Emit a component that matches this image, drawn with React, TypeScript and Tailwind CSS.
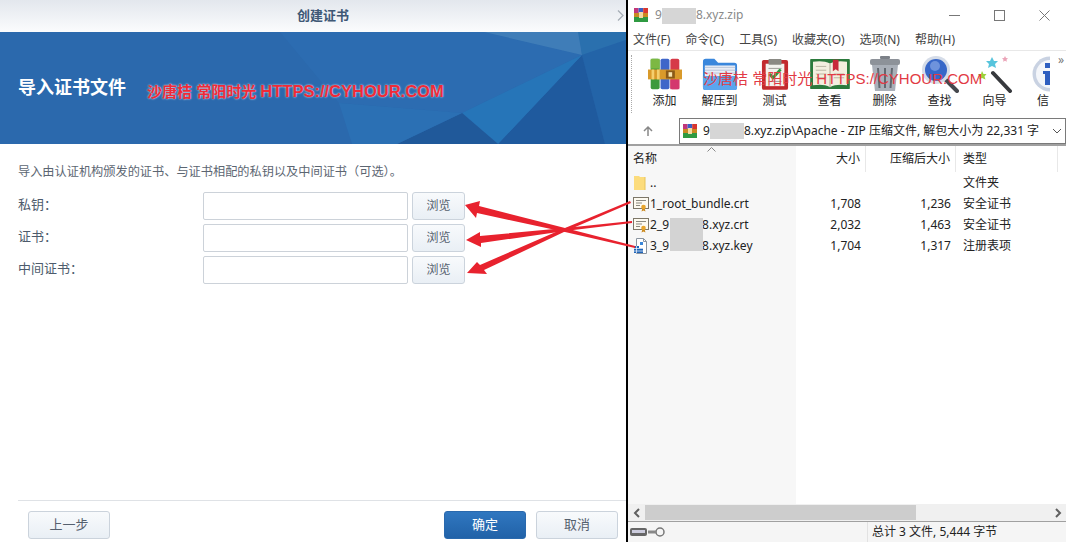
const cjk = "font-['Liberation_Sans','Noto_Sans_CJK_SC',sans-serif]";
const winFont = "font-['Noto_Sans','Noto_Sans_CJK_SC',sans-serif]";

function WinrarIcon({ size = 16 }: { size?: number }) {
	return (
		<svg width={size} height={size} viewBox="0 0 16 16">
			<rect x="1" y="1" width="4.6" height="14" fill="#c2367a" />
			<rect x="5.6" y="1" width="4.6" height="14" fill="#3b5fc4" />
			<rect x="10.2" y="1" width="4.8" height="14" fill="#d8362f" />
			<rect x="1" y="10" width="14" height="5" fill="#2f9a41" />
			<rect x="1" y="6" width="14" height="4" fill="#c98a22" />
			<rect x="6" y="5" width="4" height="6" fill="#f3d9a0" />
		</svg>
	);
}

function BigRar() {
	return (
		<svg width="34" height="36" viewBox="0 0 38 36">
			<rect x="3" y="1" width="10" height="34" rx="2" fill="#3c9a3c" />
			<rect x="14" y="1" width="10" height="34" rx="2" fill="#3f66c9" />
			<rect x="25" y="1" width="10" height="34" rx="2" fill="#d63a48" />
			<rect x="3" y="1" width="10" height="11" fill="#7cb843" />
			<rect x="25" y="24" width="10" height="11" fill="#d4386e" />
			<rect x="0" y="13" width="38" height="11" fill="#d99a2b" />
			<rect x="4" y="13" width="3" height="11" fill="#f5cf6e" />
			<rect x="10" y="13" width="3" height="11" fill="#f5cf6e" />
			<rect x="20" y="14" width="10" height="9" fill="#8a5a18" />
			<rect x="23" y="16" width="4" height="5" fill="#f8e6b0" />
		</svg>
	);
}

function FolderIcon() {
	return (
		<svg width="36" height="36" viewBox="0 0 38 36">
			<path d="M1 5a3 3 0 0 1 3-3h9l4 4h17a3 3 0 0 1 3 3v23a3 3 0 0 1-3 3H4a3 3 0 0 1-3-3z" fill="#3a87dc" />
			<rect x="3" y="9" width="32" height="12" fill="#e9edf5" />
			<path d="M3 11h32M3 14h32M3 17h32" stroke="#b7c4d8" strokeWidth="1" />
			<path d="M1 20h36v12a3 3 0 0 1-3 3H4a3 3 0 0 1-3-3z" fill="#5aa5ee" />
		</svg>
	);
}

function ClipboardIcon() {
	return (
		<svg width="28" height="36" viewBox="0 0 30 36">
			<rect x="1" y="3" width="28" height="32" rx="2" fill="#c22a2e" />
			<rect x="5" y="7" width="20" height="24" fill="#f2f2ee" />
			<rect x="8" y="2" width="14" height="6" rx="1" fill="#8a8a84" />
			<path d="M9 18l4 4 8-9" fill="none" stroke="#2c9a3c" strokeWidth="3" />
			<path d="M8 26h14M8 12h14" stroke="#9a9a94" strokeWidth="1" />
		</svg>
	);
}

function BookIcon() {
	return (
		<svg width="42" height="34" viewBox="0 0 42 36">
			<rect x="0" y="2" width="42" height="32" rx="1" fill="#2b7a3c" />
			<path d="M3 5c6-1 13-1 18 2 5-3 12-3 18-2v25c-6-1-13-1-18 2-5-3-12-3-18-2z" fill="#f3efdf" />
			<path d="M6 10h11M6 14h11M6 18h11M6 22h11M25 18h11M25 22h11" stroke="#b9b4a0" strokeWidth="1" />
			<path d="M24 3h6v12l-3-2-3 2z" fill="#c8283a" />
			<path d="M21 7v25" stroke="#a8a28c" strokeWidth="1" />
		</svg>
	);
}

function TrashIcon() {
	return (
		<svg width="30" height="36" viewBox="0 0 30 36">
			<rect x="10" y="0" width="10" height="3" rx="1" fill="#7c8188" />
			<rect x="0" y="3" width="30" height="6" rx="2" fill="#8d9299" />
			<path d="M2 9h26l-3 26H5z" fill="#a9afb8" />
			<path d="M8 12l1.500 20M15 12v20M22 12l-1.500 20" stroke="#626870" strokeWidth="2" />
		</svg>
	);
}

function SearchIcon() {
	return (
		<svg width="38" height="38" viewBox="0 0 38 38">
			<path d="M24 24l12 12" stroke="#45484d" strokeWidth="4" strokeLinecap="round" />
			<circle cx="15" cy="15" r="14" fill="#d5dce8" />
			<circle cx="15" cy="15" r="11" fill="#3767c8" />
			<circle cx="14" cy="11" r="5" fill="#6e93dc" />
		</svg>
	);
}

function WandIcon() {
	return (
		<svg width="36" height="38" viewBox="0 0 36 38">
			<path d="M16 18l17 18" stroke="#37393d" strokeWidth="4" strokeLinecap="round" />
			<path d="M15 2l2 4 4 0-3 3 1 4-4-2-4 2 1-4-3-3 4 0z" fill="#57c4dc" />
			<path d="M5 16l1.500 3 3 0-2 2.500 1 3-3.500-1.500-3 1.500 1-3-2-2.500 3 0z" fill="#9bd23a" />
			<path d="M28 1l1 2 2 .3-1.500 1.500.4 2-1.900-1-1.900 1 .4-2L25 3.300l2-.3z" fill="#eba4b8" />
		</svg>
	);
}

function InfoIcon() {
	return (
		<svg width="18" height="36" viewBox="0 0 18 36">
			<circle cx="18" cy="18" r="17.500" fill="#c9d2e2" />
			<circle cx="18" cy="18" r="14" fill="#f4f6fa" />
			<rect x="11" y="15" width="7" height="3" fill="#2f5fc0" />
			<rect x="13" y="15" width="5" height="14" fill="#2f5fc0" />
			<rect x="13" y="7" width="5" height="5" fill="#2f5fc0" />
		</svg>
	);
}

function CertIcon() {
	return (
		<svg width="16" height="16" viewBox="0 0 16 16">
			<rect x=".5" y="1.500" width="15" height="11" fill="#fdfaf0" stroke="#7d7768" />
			<path d="M3 4.500h10M3 7h6M3 9.500h4" stroke="#8d8a80" strokeWidth="1" />
			<path d="M9.500 12l-1 3.500 2-1 2 1-1-3.500z" fill="#c9871c" />
			<circle cx="10.500" cy="11" r="2.300" fill="#e8a52a" />
		</svg>
	);
}

function KeyFileIcon() {
	return (
		<svg width="16" height="16" viewBox="0 0 16 16">
			<path d="M3.500.5h7l3 3v12h-10z" fill="#fff" stroke="#8a94a0" />
			<path d="M10.500.5v3h3" fill="none" stroke="#8a94a0" />
			<path d="M1 8h5v7H1zM6 10h4v5H6z" fill="#1f64b8" />
			<path d="M7 4h3v3H7z" fill="#3a86d8" />
			<path d="M1 10.500h9M1 13h9M3.500 8v7" stroke="#fff" strokeWidth=".7" />
		</svg>
	);
}

function BannerArt() {
	return (
		<svg className="absolute inset-0 h-full w-full" viewBox="0 0 626 112" preserveAspectRatio="none">
			<polygon points="280,0 484,0 582,23 462,81 339,71" fill="#2c6cb1" />
			<polygon points="484,0 580,0 582,23" fill="#3f7db8" />
			<polygon points="578,0 626,0 626,8 582,23" fill="#2a70ae" />
			<polygon points="582,23 626,8 626,112 605,112" fill="#2364a8" />
			<polygon points="582,23 498,112 605,112" fill="#1f5a9e" />
			<polygon points="582,23 462,81 498,112" fill="#2675b8" />
			<polygon points="462,81 397,112 498,112" fill="#20599a" />
			<polygon points="339,71 462,81 397,112 352,112" fill="#2b70b4" />
		</svg>
	);
}

function FieldRow({ label }: { label: string }) {
	return (
		<div className="flex items-center h-[28px] text-[13px] text-[#4d5b6c]">
			<span className="w-[185px] shrink-0 -mt-[3px]">{label}</span>
			<div className="w-[205px] h-[28px] bg-white border border-[#ccd2d9] rounded-[2px]" />
			<button className="ml-[4px] w-[53px] h-[28px] bg-gradient-to-b from-[#f8fafc] to-[#e9eff5] border border-[#cbd3dc] rounded-[3px] text-[#55606e] text-[12px]">
				浏览
			</button>
		</div>
	);
}

function ToolButton({ label, children }: { label: string; children: React.ReactNode }) {
	return (
		<div className="w-[55px] shrink-0 flex flex-col items-center">
			<div className="h-[38px] flex items-center justify-center">{children}</div>
			<span className="text-[12px] leading-[16px] text-[#222]">{label}</span>
		</div>
	);
}

function ListRow({ icon, name, size, packed, type }: { icon: React.ReactNode; name: React.ReactNode; size: string; packed: string; type: string }) {
	return (
		<div className="flex h-[21px] items-center text-[12px] text-[#222]">
			<div className="w-[168px] shrink-0 h-full pl-[5px] flex items-center gap-[1px]">
				{icon}
				<span>{name}</span>
			</div>
			<span className="w-[65px] text-right">{size}</span>
			<span className="w-[90px] text-right">{packed}</span>
			<span className="ml-[12px]">{type}</span>
		</div>
	);
}

function Blur({ w }: { w: string }) {
	return <span className={`inline-block ${w} h-[16px] bg-[#d6d6d6] align-middle`} />;
}

export default function App() {
	return (
		<div className={`relative flex w-[1066px] h-[542px] overflow-hidden bg-white ${cjk}`}>
			{/* left: synology dialog */}
			<div className="w-[626px] shrink-0 flex flex-col">
				<div className="relative h-[32px] shrink-0 flex items-center justify-center pl-[20px] bg-gradient-to-b from-[#e3e7ed] to-[#fbfcfd] text-[13px] font-bold text-[#3f5876]">
					创建证书
					<svg className="absolute right-[2px] top-[10px]" width="7" height="11" viewBox="0 0 7 11">
						<path d="M1 .5L6 5.500 1 10.500" fill="none" stroke="#a4acb5" strokeWidth="1.200" />
					</svg>
				</div>
				<div className="relative h-[112px] shrink-0 flex items-center bg-[#2b69ad] overflow-hidden">
					<BannerArt />
					<span className="relative ml-[18px] text-[18px] font-bold text-white">导入证书文件</span>
				</div>
				<p className="mt-[20px] ml-[18px] text-[12.200px] leading-[16px] text-[#5c6672]">
					导入由认证机构颁发的证书、与证书相配的私钥以及中间证书（可选）。
				</p>
				<div className="mt-[12px] ml-[18px] flex flex-col gap-[4px]">
					<FieldRow label="私钥：" />
					<FieldRow label="证书：" />
					<FieldRow label="中间证书：" />
				</div>
				<div className="mt-auto ml-[18px] pt-[10px] pb-[3px] pr-[8px] border-t border-[#dfe2e6] flex items-center">
					<button className="ml-[10px] w-[82px] h-[28px] bg-gradient-to-b from-[#f8fafc] to-[#e9eff5] border border-[#cbd3dc] rounded-[3px] text-[13px] text-[#55606e]">
						上一步
					</button>
					<button className="ml-auto w-[82px] h-[28px] bg-gradient-to-b from-[#3077c0] to-[#2162a8] border border-[#2a69ad] rounded-[3px] text-[13px] text-white">
						确定
					</button>
					<button className="ml-[10px] w-[82px] h-[28px] bg-gradient-to-b from-[#f8fafc] to-[#e9eff5] border border-[#cbd3dc] rounded-[3px] text-[13px] text-[#55606e]">
						取消
					</button>
				</div>
			</div>

			{/* right: winrar window */}
			<div className={`flex-1 min-w-0 flex flex-col border-l-[2px] border-black ${winFont}`}>
				<div className="h-[30px] shrink-0 flex items-center pl-[5px] text-[12px] text-[#8a8a8a]">
					<WinrarIcon />
					<span className="ml-[6px] whitespace-nowrap">9<Blur w="w-[34px]" />8.xyz.zip</span>
					<div className="ml-auto flex items-center gap-[34px] pr-[16px] text-[#777]">
						<svg width="11" height="11" viewBox="0 0 11 11"><path d="M0 5.500h11" stroke="currentColor" /></svg>
						<svg width="11" height="11" viewBox="0 0 11 11"><rect x=".5" y=".5" width="10" height="10" fill="none" stroke="currentColor" /></svg>
						<svg width="11" height="11" viewBox="0 0 11 11"><path d="M.5.500l10 10M10.500.500l-10 10" stroke="currentColor" /></svg>
					</div>
				</div>
				<div className="h-[20px] shrink-0 flex items-center pl-[5px] text-[12px] text-[#444] gap-[15px]">
					<span>文件(F)</span>
					<span>命令(C)</span>
					<span>工具(S)</span>
					<span>收藏夹(O)</span>
					<span>选项(N)</span>
					<span>帮助(H)</span>
				</div>
				<div className="relative h-[67px] shrink-0 flex items-start pl-[3px] pt-[4px] border-t border-[#e8e8e8]">
					<div className="h-[58px] border-l border-dotted border-[#aaa]" />
					<div className="flex w-[418px] overflow-hidden ml-[5px]">
						<ToolButton label="添加"><BigRar /></ToolButton>
						<ToolButton label="解压到"><FolderIcon /></ToolButton>
						<ToolButton label="测试"><ClipboardIcon /></ToolButton>
						<ToolButton label="查看"><BookIcon /></ToolButton>
						<ToolButton label="删除"><TrashIcon /></ToolButton>
						<ToolButton label="查找"><SearchIcon /></ToolButton>
						<ToolButton label="向导"><WandIcon /></ToolButton>
						<div className="ml-[10px] w-[18px] shrink-0 flex flex-col">
							<div className="h-[38px] flex items-center"><InfoIcon /></div>
							<span className="pl-[5px] text-[12px] leading-[16px] text-[#222]">信</span>
						</div>
					</div>
					<span className="absolute right-[2px] top-[0px] text-[12px] text-[#777]">»</span>
				</div>
				<div className="h-[29px] shrink-0 flex items-center border-b-2 border-[#a0a0a0]">
					<span className="w-[51px] shrink-0 pl-[14px] text-[#888]">
						<svg width="12" height="12" viewBox="0 0 12 12"><path d="M6 11V2M2 6l4-4 4 4" fill="none" stroke="currentColor" strokeWidth="1.500" /></svg>
					</span>
					<div className="flex-1 h-[26px] min-w-0 flex items-center pl-[2px] border border-[#7a7a7a] text-[12px] text-[#222] whitespace-nowrap">
						<WinrarIcon />
						<span className="ml-[5px]">9<Blur w="w-[34px]" />8.xyz.zip\Apache - ZIP 压缩文件, 解包大小为 22,331 字</span>
						<svg className="ml-auto mr-[3px] shrink-0" width="10" height="10" viewBox="0 0 10 10"><path d="M1 3l4 4 4-4" fill="none" stroke="#555" /></svg>
					</div>
				</div>
				<div className="h-[26px] shrink-0 flex items-center text-[12px] text-[#222] relative">
					<svg className="absolute left-[79px] top-[1px]" width="9" height="5" viewBox="0 0 9 5"><path d="M.5 4.500l4-4 4 4" fill="none" stroke="#888" /></svg>
					<span className="w-[168px] pl-[5px] bg-[#f7f7f7] h-full flex items-center">名称</span>
					<span className="w-[70px] border-r border-[#e8e8e8] pr-[5px] h-full flex items-center justify-end">大小</span>
					<span className="w-[90px] border-r border-[#e8e8e8] pr-[5px] h-full flex items-center justify-end">压缩后大小</span>
					<span className="w-[102px] pl-[7px] border-r border-[#e8e8e8] h-full flex items-center">类型</span>
				</div>
				<div className="flex-1 min-h-0 relative">
					<div className="absolute left-0 top-0 bottom-0 w-[168px] bg-[#f7f7f7]" />
					<div className="relative">
						<ListRow
							icon={<svg width="16" height="16" viewBox="0 0 16 16"><path d="M1 1h5l1 1h5v13H1z" fill="#fcdc7c" /><path d="M12 2v13" stroke="#e6c35a" /></svg>}
							name=".."
							size=""
							packed=""
							type="文件夹"
						/>
						<ListRow icon={<CertIcon />} name="1_root_bundle.crt" size="1,708" packed="1,236" type="安全证书" />
						<ListRow icon={<CertIcon />} name={<>2_9<span className="inline-block w-[33px]" />8.xyz.crt</>} size="2,032" packed="1,463" type="安全证书" />
						<ListRow icon={<KeyFileIcon />} name={<>3_9<span className="inline-block w-[33px]" />8.xyz.key</>} size="1,704" packed="1,317" type="注册表项" />
					</div>
					{/* redaction over the two file names */}
					<div className="absolute left-[42px] top-[46px] w-[33px] h-[33px] bg-[#d3d3d3]" />
				</div>
				<div className="h-[18px] shrink-0 flex items-center bg-[#f0f0f0] border-b border-[#a0a0a0]">
					<div className="w-[17px] shrink-0 flex justify-center">
						<svg width="8" height="10" viewBox="0 0 8 10"><path d="M6 1L2 5l4 4" fill="none" stroke="#606060" strokeWidth="2" /></svg>
					</div>
					<div className="w-[271px] h-[15px] bg-[#cdcdcd]" />
					<div className="ml-auto w-[17px] shrink-0 flex justify-center">
						<svg width="8" height="10" viewBox="0 0 8 10"><path d="M2 1l4 4-4 4" fill="none" stroke="#606060" strokeWidth="2" /></svg>
					</div>
				</div>
				<div className="h-[20px] shrink-0 flex items-center bg-[#f5f5f5] text-[12px] text-[#222]">
					<div className="w-[240px] h-full pl-[2px] flex items-center gap-[1px] border-r border-[#e2e2e2]">
						<svg width="17" height="8" viewBox="0 0 17 8"><rect width="17" height="8" rx="2" fill="#666" /><rect x="2" y="2" width="13" height="3" fill="#ccd" /></svg>
						<svg width="17" height="10" viewBox="0 0 17 10"><circle cx="12" cy="5" r="4" fill="none" stroke="#777" strokeWidth="1.500" /><path d="M0 5h8" stroke="#888" strokeWidth="3" /></svg>
					</div>
					<span className="ml-[4px]">总计 3 文件, 5,444 字节</span>
				</div>
			</div>

			{/* watermarks, pasted over the screenshot */}
			<span className="absolute left-[147px] top-[79px] text-[15px] font-bold text-[#ee2a38] whitespace-nowrap [text-shadow:0_0_2px_#fff]">
				沙唐桔 常阳时光 <span className="text-[16.500px]">HTTPS://CYHOUR.COM</span>
			</span>
			<span className="absolute left-[703px] top-[68px] text-[15px] text-[#e23a44] whitespace-nowrap">
				沙唐桔 常阳时光 HTTPS://CYHOUR.COM
			</span>

			{/* arrows */}
			<svg className="absolute inset-0 pointer-events-none" width="1066" height="542" viewBox="0 0 1066 542">
				<g fill="#e8222e">
					<polygon points="465,205 480,201 479,206 565,228 635,246 635,248 565,232 477,213 476,218" />
					<polygon points="466,240 480,232 480,236 565,228 632,221 632,223 565,231 481,243 481,247" />
					<polygon points="467,273 477,262 480,265 565,228 630,201 631,203 566,231 484,270 487,274" />
				</g>
			</svg>
		</div>
	);
}
